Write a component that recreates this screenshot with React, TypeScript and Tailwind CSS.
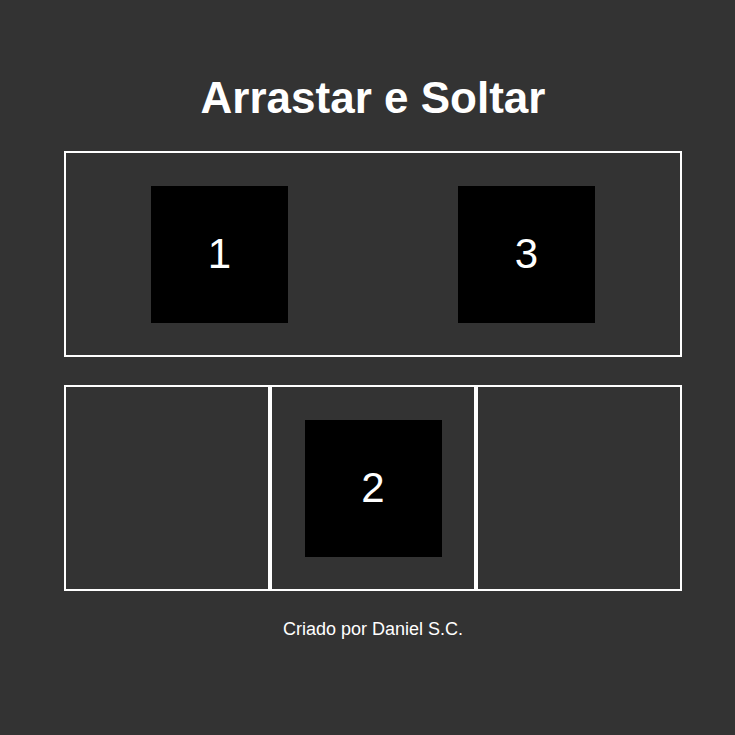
const Item = ({ n }: { n: string }) => (
    <div className="w-[137px] h-[137px] bg-black flex items-center justify-center text-white text-[42px] leading-none">
        {n}
    </div>
);

export default function App() {
    return (
        <div className="w-[735px] h-[735px] bg-[#333333] text-white font-['Liberation_Sans',Arial,sans-serif]">
            <div className="ml-[64px] w-[618px] pt-[74px]">
                <h1 className="text-center text-[44px] font-bold leading-[48px]">Arrastar e Soltar</h1>
                <div className="mt-[29px] h-[206px] border-2 border-white flex items-center justify-around">
                    <Item n="1" />
                    <Item n="3" />
                </div>
                <div className="mt-[28px] flex">
                    <div className="w-[206px] h-[206px] border-2 border-white" />
                    <div className="w-[206px] h-[206px] border-2 border-white flex items-center justify-center">
                        <Item n="2" />
                    </div>
                    <div className="w-[206px] h-[206px] border-2 border-white" />
                </div>
                <p className="mt-[28px] text-center text-[18px] leading-[20px]">Criado por Daniel S.C.</p>
            </div>
        </div>
    );
}
